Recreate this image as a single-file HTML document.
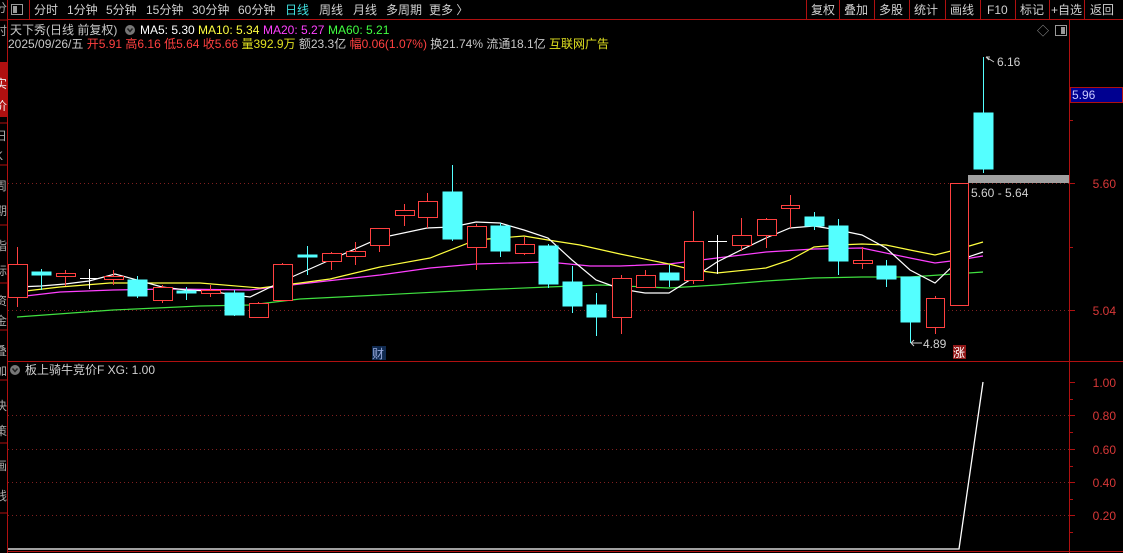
<!DOCTYPE html>
<html><head><meta charset="utf-8"><style>
html,body{margin:0;padding:0;background:#000;width:1123px;height:553px;overflow:hidden}
svg{display:block}
text{font-family:"Liberation Sans","Noto Sans CJK SC",sans-serif}
</style></head><body>
<svg width="1123" height="553" viewBox="0 0 1123 553" xmlns="http://www.w3.org/2000/svg">
<rect width="1123" height="553" fill="#000"/>
<!-- sidebar -->
<rect x="0" y="62" width="7" height="55" fill="#b01010"/>
<g stroke="#b01010" stroke-width="1">
<line x1="7.5" y1="0" x2="7.5" y2="553"/>
<line x1="0" y1="20" x2="7" y2="20"/><line x1="0" y1="123" x2="7" y2="123"/><line x1="0" y1="165" x2="7" y2="165"/>
<line x1="0" y1="225" x2="7" y2="225"/><line x1="0" y1="283" x2="7" y2="283"/><line x1="0" y1="330" x2="7" y2="330"/>
<line x1="0" y1="380" x2="7" y2="380"/><line x1="0" y1="443" x2="7" y2="443"/><line x1="0" y1="513" x2="7" y2="513"/>
</g>
<g fill="#aaa" font-size="12"><text x="-5" y="12">分</text><text x="-5" y="35">时</text><text x="-5" y="88" fill="#eee">实</text><text x="-5" y="110" fill="#eee">价</text><text x="-5" y="140">日</text><text x="-5" y="160">K</text><text x="-5" y="190">周</text><text x="-5" y="215">期</text><text x="-5" y="250">指</text><text x="-5" y="275">标</text><text x="-5" y="305">资</text><text x="-5" y="325">金</text><text x="-5" y="355">叠</text><text x="-5" y="375">加</text><text x="-5" y="410">决</text><text x="-5" y="435">策</text><text x="-5" y="470">画</text><text x="-5" y="500">线</text></g>
<!-- toolbar -->
<line x1="7" y1="19.5" x2="1123" y2="19.5" stroke="#b01010"/>
<rect x="11.5" y="4.5" width="11" height="10" fill="none" stroke="#999"/><rect x="13" y="6" width="4" height="7" fill="#999"/>
<line x1="29.5" y1="0" x2="29.5" y2="19" stroke="#b01010"/>
<g font-size="12" fill="#d0d0d0">
<text x="34" y="14">分时</text><text x="67" y="14">1分钟</text><text x="106" y="14">5分钟</text><text x="146" y="14">15分钟</text><text x="192" y="14">30分钟</text><text x="238" y="14">60分钟</text>
<text x="285" y="14" fill="#40e0e0">日线</text><text x="319" y="14">周线</text><text x="353" y="14">月线</text><text x="386" y="14">多周期</text><text x="429" y="14">更多 〉</text>
</g>
<g stroke="#b01010"><line x1="806.5" y1="0" x2="806.5" y2="19"/><line x1="839.5" y1="0" x2="839.5" y2="19"/><line x1="874.5" y1="0" x2="874.5" y2="19"/><line x1="909.5" y1="0" x2="909.5" y2="19"/><line x1="945.5" y1="0" x2="945.5" y2="19"/><line x1="980.5" y1="0" x2="980.5" y2="19"/><line x1="1015.5" y1="0" x2="1015.5" y2="19"/><line x1="1049.5" y1="0" x2="1049.5" y2="19"/><line x1="1084.5" y1="0" x2="1084.5" y2="19"/></g>
<g font-size="12" fill="#d0d0d0"><text x="811" y="14">复权</text><text x="844" y="14">叠加</text><text x="879" y="14">多股</text><text x="914" y="14">统计</text><text x="950" y="14">画线</text><text x="987" y="14">F10</text><text x="1020" y="14">标记</text><text x="1051" y="14">+自选</text><text x="1090" y="14">返回</text></g>
<!-- headers -->
<g font-size="12">
<text x="10" y="34" fill="#c8c8c8">天下秀(日线 前复权)</text>
<circle cx="130" cy="30" r="5" fill="#777"/><path d="M127.5 28.5 L130 31.5 L132.5 28.5" stroke="#222" stroke-width="1.5" fill="none"/>
<text x="140" y="34" fill="#fff">MA5: 5.30</text><text x="198" y="34" fill="#ffff40">MA10: 5.34</text><text x="263" y="34" fill="#ff40ff">MA20: 5.27</text><text x="328" y="34" fill="#40ff40">MA60: 5.21</text>
<text x="8" y="48" fill="#c8c8c8">2025/09/26/五 <tspan fill="#ff4040">开5.91 高6.16 低5.64 收5.66 </tspan><tspan fill="#e0e020">量392.9万 </tspan><tspan fill="#c8c8c8">额23.3亿 </tspan><tspan fill="#ff4040">幅0.06(1.07%) </tspan><tspan fill="#c8c8c8">换21.74% 流通18.1亿 </tspan><tspan fill="#e0e020">互联网广告</tspan></text>
</g>
<text x="1037" y="35" font-size="12" fill="#999">◇</text>
<rect x="1055.5" y="25.5" width="11" height="10" fill="none" stroke="#999"/><rect x="1061" y="27" width="4" height="7" fill="#999"/>
<!-- frame -->
<line x1="1069.5" y1="20" x2="1069.5" y2="553" stroke="#b01010"/>
<line x1="7" y1="361.5" x2="1123" y2="361.5" stroke="#b01010"/>
<line x1="7" y1="551.5" x2="1123" y2="551.5" stroke="#b01010"/>
<!-- grid -->
<g stroke="#802020" stroke-dasharray="1 3"><line x1="8" y1="183.5" x2="1069" y2="183.5"/><line x1="8" y1="310.5" x2="1069" y2="310.5"/>
<line x1="8" y1="415.5" x2="1069" y2="415.5"/><line x1="8" y1="449.5" x2="1069" y2="449.5"/><line x1="8" y1="482.5" x2="1069" y2="482.5"/><line x1="8" y1="515.5" x2="1069" y2="515.5"/></g>
<g stroke="#b01010"><line x1="1070" y1="183.5" x2="1075" y2="183.5"/><line x1="1070" y1="310.5" x2="1075" y2="310.5"/><line x1="1070" y1="120.5" x2="1073" y2="120.5"/><line x1="1070" y1="247.5" x2="1073" y2="247.5"/>
<line x1="1070" y1="382.5" x2="1075" y2="382.5"/><line x1="1070" y1="415.5" x2="1075" y2="415.5"/><line x1="1070" y1="449.5" x2="1075" y2="449.5"/><line x1="1070" y1="482.5" x2="1075" y2="482.5"/><line x1="1070" y1="515.5" x2="1075" y2="515.5"/>
<line x1="1070" y1="399.5" x2="1073" y2="399.5"/><line x1="1070" y1="432.5" x2="1073" y2="432.5"/><line x1="1070" y1="466.5" x2="1073" y2="466.5"/><line x1="1070" y1="499.5" x2="1073" y2="499.5"/><line x1="1070" y1="532.5" x2="1073" y2="532.5"/></g>
<g font-size="12" fill="#d83838" text-anchor="end"><text x="1116" y="188">5.60</text><text x="1116" y="315">5.04</text>
<text x="1116" y="387">1.00</text><text x="1116" y="420">0.80</text><text x="1116" y="454">0.60</text><text x="1116" y="487">0.40</text><text x="1116" y="520">0.20</text></g>
<rect x="1070.5" y="87.5" width="52" height="15" fill="#000090" stroke="#b01010"/>
<text x="1072" y="99" font-size="12" fill="#c8c8ff">5.96</text>
<!-- MA lines -->
<g fill="none" stroke-width="1.2">
<polyline stroke="#40e040" points="17,317 113,310 200,306 250,305 300,299 380,295 476,290 548,287 600,285 669,288 717,285 766,281 814,278 862,277 910,277 983,272"/>
<polyline stroke="#ff40ff" points="17,297 60,292 113,290 170,289 250,290 300,284 380,275 430,268 476,264 548,262 590,266 620,266 669,264 717,258 766,252 814,249 862,248 910,258 935,263 959,260 983,256"/>
<polyline stroke="#ffff40" points="17,292 60,287 110,283 200,283 260,288 300,283 330,279 380,267 430,258 476,240 500,238 524,236 548,240 580,245 620,254 669,264 693,270 717,273 766,268 790,260 814,247 838,245 862,244 886,245 910,250 935,255 959,249 983,242"/>
<polyline stroke="#fff" points="17,287 41,286 65,284 89,281 115,274 137,280 162,287 186,290 210,291 234,295 250,297 285,280 330,260 380,238 427,228 452,227 476,222 500,223 524,230 548,238 572,260 596,280 621,289 645,293 669,293 693,278 717,262 741,250 766,238 790,228 814,226 838,230 862,235 886,248 910,270 935,283 959,260 983,252"/>
</g>
<!-- candles -->
<g stroke-width="1" shape-rendering="crispEdges">
<g stroke="#ff4040" fill="#000">
<line x1="17.5" y1="247" x2="17.5" y2="307"/><rect x="8.5" y="264.5" width="19" height="33"/>
<line x1="65.5" y1="270" x2="65.5" y2="286"/><rect x="56.5" y="273.5" width="19" height="3"/>
<line x1="113.5" y1="270" x2="113.5" y2="285"/><rect x="104.5" y="276.5" width="19" height="3"/>
<line x1="162.5" y1="285" x2="162.5" y2="303"/><rect x="153.5" y="287.5" width="19" height="13"/>
<line x1="210.5" y1="285" x2="210.5" y2="297"/><rect x="201.5" y="290.5" width="19" height="3"/>
<line x1="258.5" y1="302" x2="258.5" y2="318"/><rect x="249.5" y="303.5" width="19" height="14"/>
<line x1="282.5" y1="263" x2="282.5" y2="301"/><rect x="273.5" y="264.5" width="19" height="36"/>
<line x1="331.5" y1="252" x2="331.5" y2="270"/><rect x="322.5" y="253.5" width="19" height="8"/>
<line x1="355.5" y1="242" x2="355.5" y2="265"/><rect x="346.5" y="251.5" width="19" height="5"/>
<line x1="379.5" y1="228" x2="379.5" y2="252"/><rect x="370.5" y="228.5" width="19" height="17"/>
<line x1="404.5" y1="204" x2="404.5" y2="226"/><rect x="395.5" y="210.5" width="19" height="5"/>
<line x1="427.5" y1="193" x2="427.5" y2="228"/><rect x="418.5" y="201.5" width="19" height="16"/>
<line x1="476.5" y1="224" x2="476.5" y2="270"/><rect x="467.5" y="226.5" width="19" height="21"/>
<line x1="524.5" y1="237" x2="524.5" y2="255"/><rect x="515.5" y="244.5" width="19" height="9"/>
<line x1="621.5" y1="275" x2="621.5" y2="334"/><rect x="612.5" y="278.5" width="19" height="39"/>
<line x1="645.5" y1="270" x2="645.5" y2="288"/><rect x="636.5" y="275.5" width="19" height="12"/>
<line x1="693.5" y1="211" x2="693.5" y2="284"/><rect x="684.5" y="241.5" width="19" height="39"/>
<line x1="741.5" y1="218" x2="741.5" y2="251"/><rect x="732.5" y="235.5" width="19" height="10"/>
<line x1="766.5" y1="218" x2="766.5" y2="248"/><rect x="757.5" y="219.5" width="19" height="16"/>
<line x1="790.5" y1="195" x2="790.5" y2="228"/><rect x="781.5" y="205.5" width="18" height="3"/>
<line x1="862.5" y1="247" x2="862.5" y2="269"/><rect x="853.5" y="260.5" width="19" height="3"/>
<line x1="935.5" y1="296" x2="935.5" y2="334"/><rect x="926.5" y="298.5" width="18" height="29"/>
<line x1="959.5" y1="183" x2="959.5" y2="306"/><rect x="950.5" y="183.5" width="18" height="122"/>
</g>
<g stroke="#54ffff" fill="#54ffff">
<line x1="41.5" y1="269" x2="41.5" y2="290"/><rect x="32" y="272" width="19" height="3"/>
<line x1="137.5" y1="276" x2="137.5" y2="298"/><rect x="128" y="280" width="19" height="16"/>
<line x1="186.5" y1="287" x2="186.5" y2="300"/><rect x="177" y="291" width="19" height="2"/>
<line x1="234.5" y1="290" x2="234.5" y2="316"/><rect x="225" y="293" width="19" height="22"/>
<line x1="307.5" y1="246" x2="307.5" y2="275"/><rect x="298" y="255" width="19" height="2"/>
<line x1="452.5" y1="165" x2="452.5" y2="241"/><rect x="443" y="192" width="19" height="47"/>
<line x1="500.5" y1="223" x2="500.5" y2="257"/><rect x="491" y="226" width="19" height="25"/>
<line x1="548.5" y1="244" x2="548.5" y2="288"/><rect x="539" y="246" width="19" height="38"/>
<line x1="572.5" y1="266" x2="572.5" y2="313"/><rect x="563" y="282" width="19" height="24"/>
<line x1="596.5" y1="293" x2="596.5" y2="336"/><rect x="587" y="305" width="19" height="12"/>
<line x1="669.5" y1="265" x2="669.5" y2="287"/><rect x="660" y="273" width="19" height="7"/>
<line x1="814.5" y1="212" x2="814.5" y2="230"/><rect x="805" y="217" width="19" height="9"/>
<line x1="838.5" y1="219" x2="838.5" y2="275"/><rect x="829" y="226" width="19" height="35"/>
<line x1="886.5" y1="260" x2="886.5" y2="287"/><rect x="877" y="266" width="19" height="13"/>
<line x1="910.5" y1="277" x2="910.5" y2="343"/><rect x="901" y="277" width="19" height="45"/>
<line x1="983.5" y1="57" x2="983.5" y2="173"/><rect x="974" y="113" width="19" height="56"/>
</g>
<g stroke="#fff"><line x1="89.5" y1="269" x2="89.5" y2="289"/><line x1="80" y1="278.5" x2="99" y2="278.5"/>
<line x1="717.5" y1="235" x2="717.5" y2="274"/><line x1="708" y1="241.5" x2="727" y2="241.5"/></g>
</g>
<!-- annotations -->
<rect x="968" y="175" width="101" height="8" fill="#a0a0a0"/>
<text x="971" y="197" font-size="12" fill="#d0d0d0">5.60 - 5.64</text>
<path d="M986 57 H990 M986 57 L989 60 M986 57 L994 62" stroke="#ccc" fill="none"/>
<text x="997" y="66" font-size="12" fill="#d0d0d0">6.16</text>
<path d="M911 343 H922 M911 343 L914 340 M911 343 L914 346" stroke="#ccc" fill="none"/>
<text x="923" y="348" font-size="12" fill="#d0d0d0">4.89</text>
<rect x="953" y="345" width="13" height="14" fill="#901818"/><text x="953" y="357" font-size="12" fill="#fff">涨</text>
<rect x="372" y="346" width="14" height="14" fill="#102a50"/><text x="372" y="358" font-size="12" fill="#9ad">财</text>
<!-- indicator panel -->
<circle cx="15" cy="370" r="5" fill="#777"/><path d="M12.5 368.5 L15 371.5 L17.5 368.5" stroke="#222" stroke-width="1.5" fill="none"/>
<text x="25" y="374" font-size="12" fill="#d0d0d0">板上骑牛竞价F  XG: 1.00</text>
<polyline points="8,549 959,549 983,382" fill="none" stroke="#fff" stroke-width="1.3"/>
</svg>
</body></html>
